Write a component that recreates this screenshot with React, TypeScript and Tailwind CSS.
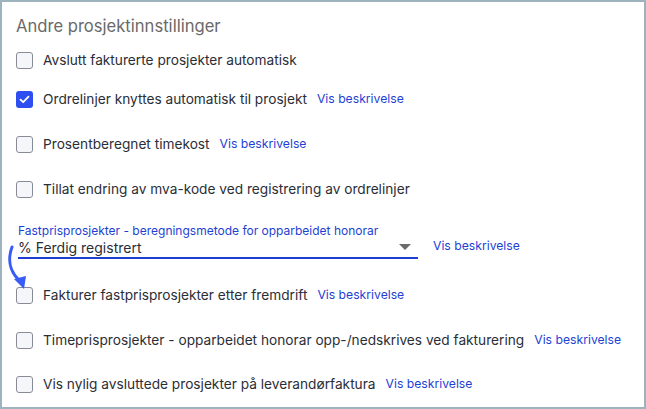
import React from "react";

interface Option {
  label: string;
  checked?: boolean;
  link?: boolean;
  mt: string;
}

const before: Option[] = [
  { label: "Avslutt fakturerte prosjekter automatisk", mt: "mt-[11px]" },
  { label: "Ordrelinjer knyttes automatisk til prosjekt", checked: true, link: true, mt: "mt-[15px]" },
  { label: "Prosentberegnet timekost", link: true, mt: "mt-[21px]" },
  { label: "Tillat endring av mva-kode ved registrering av ordrelinjer", mt: "mt-[21px]" },
];

const after: Option[] = [
  { label: "Fakturer fastprisprosjekter etter fremdrift", link: true, mt: "mt-[24px]" },
  { label: "Timeprisprosjekter - opparbeidet honorar opp-/nedskrives ved fakturering", link: true, mt: "mt-[21px]" },
  { label: "Vis nylig avsluttede prosjekter på leverandørfaktura", link: true, mt: "mt-[20px]" },
];

function Checkbox({ checked }: { checked?: boolean }) {
  if (checked) {
    return (
      <span className="flex h-[17px] w-[17px] shrink-0 items-center justify-center rounded-[3px] bg-[#2d4ef0]">
        <svg width="11" height="9" viewBox="0 0 11 9" fill="none">
          <path d="M1.5 4.6 4.2 7.2 9.5 1.6" stroke="white" strokeWidth="1.8" strokeLinecap="round" strokeLinejoin="round" />
        </svg>
      </span>
    );
  }
  return (
    <span className="h-[17px] w-[17px] shrink-0 rounded-[3px] border border-[#868b96] bg-[#f4f6fa]" />
  );
}

function Row({ option }: { option: Option }) {
  return (
    <div className={`flex h-[24px] items-center ${option.mt}`}>
      <Checkbox checked={option.checked} />
      <span className="ml-[10px] text-[13.7px] text-[#2a2e37]">{option.label}</span>
      {option.link && (
        <span className="ml-[10px] text-[12.2px] text-[#1d3fd4]">Vis beskrivelse</span>
      )}
    </div>
  );
}

export default function App() {
  return (
    <div
      className="relative h-[409px] w-[646px] border-2 border-[#9db4bf] bg-white pl-[14px]"
      style={{ fontFamily: "Inter, 'Noto Sans', sans-serif" }}
    >
      <h2 className="pt-[13px] text-[16.6px] leading-[22px] text-[#6a6a6a]">
        Andre prosjektinnstillinger
      </h2>

      <div>
        {before.map((o) => (
          <Row key={o.label} option={o} />
        ))}
      </div>

      <div className="mt-[22px] flex items-end">
        <div className="ml-[2px] w-[400px]">
          <div className="text-[12px] leading-[15px] text-[#1d3fd4]">
            Fastprisprosjekter - beregningsmetode for opparbeidet honorar
          </div>
          <div className="flex h-[21px] items-center justify-between border-b-2 border-[#1d3fd4]">
            <span className="text-[14px] text-[#2a2e37]">% Ferdig registrert</span>
            <svg width="12" height="7" viewBox="0 0 12 7" className="mr-[7px]">
              <path d="M0 0h12L6 6z" fill="#6b6b6b" />
            </svg>
          </div>
        </div>
        <span className="mb-[4px] ml-[15px] text-[12.2px] text-[#1d3fd4]">Vis beskrivelse</span>
      </div>

      <div>
        {after.map((o) => (
          <Row key={o.label} option={o} />
        ))}
      </div>

      {/* annotation arrow */}
      <svg
        className="absolute left-[-2px] top-[238px]"
        width="32"
        height="54"
        viewBox="0 0 32 54"
        fill="none"
      >
        <path d="M12 7C8 18 9 30 18 39" stroke="#3a5cf6" strokeWidth="3" strokeLinecap="round" />
        <path d="M14 39 26 36 24 49Z" fill="#3a5cf6" />
      </svg>
    </div>
  );
}
